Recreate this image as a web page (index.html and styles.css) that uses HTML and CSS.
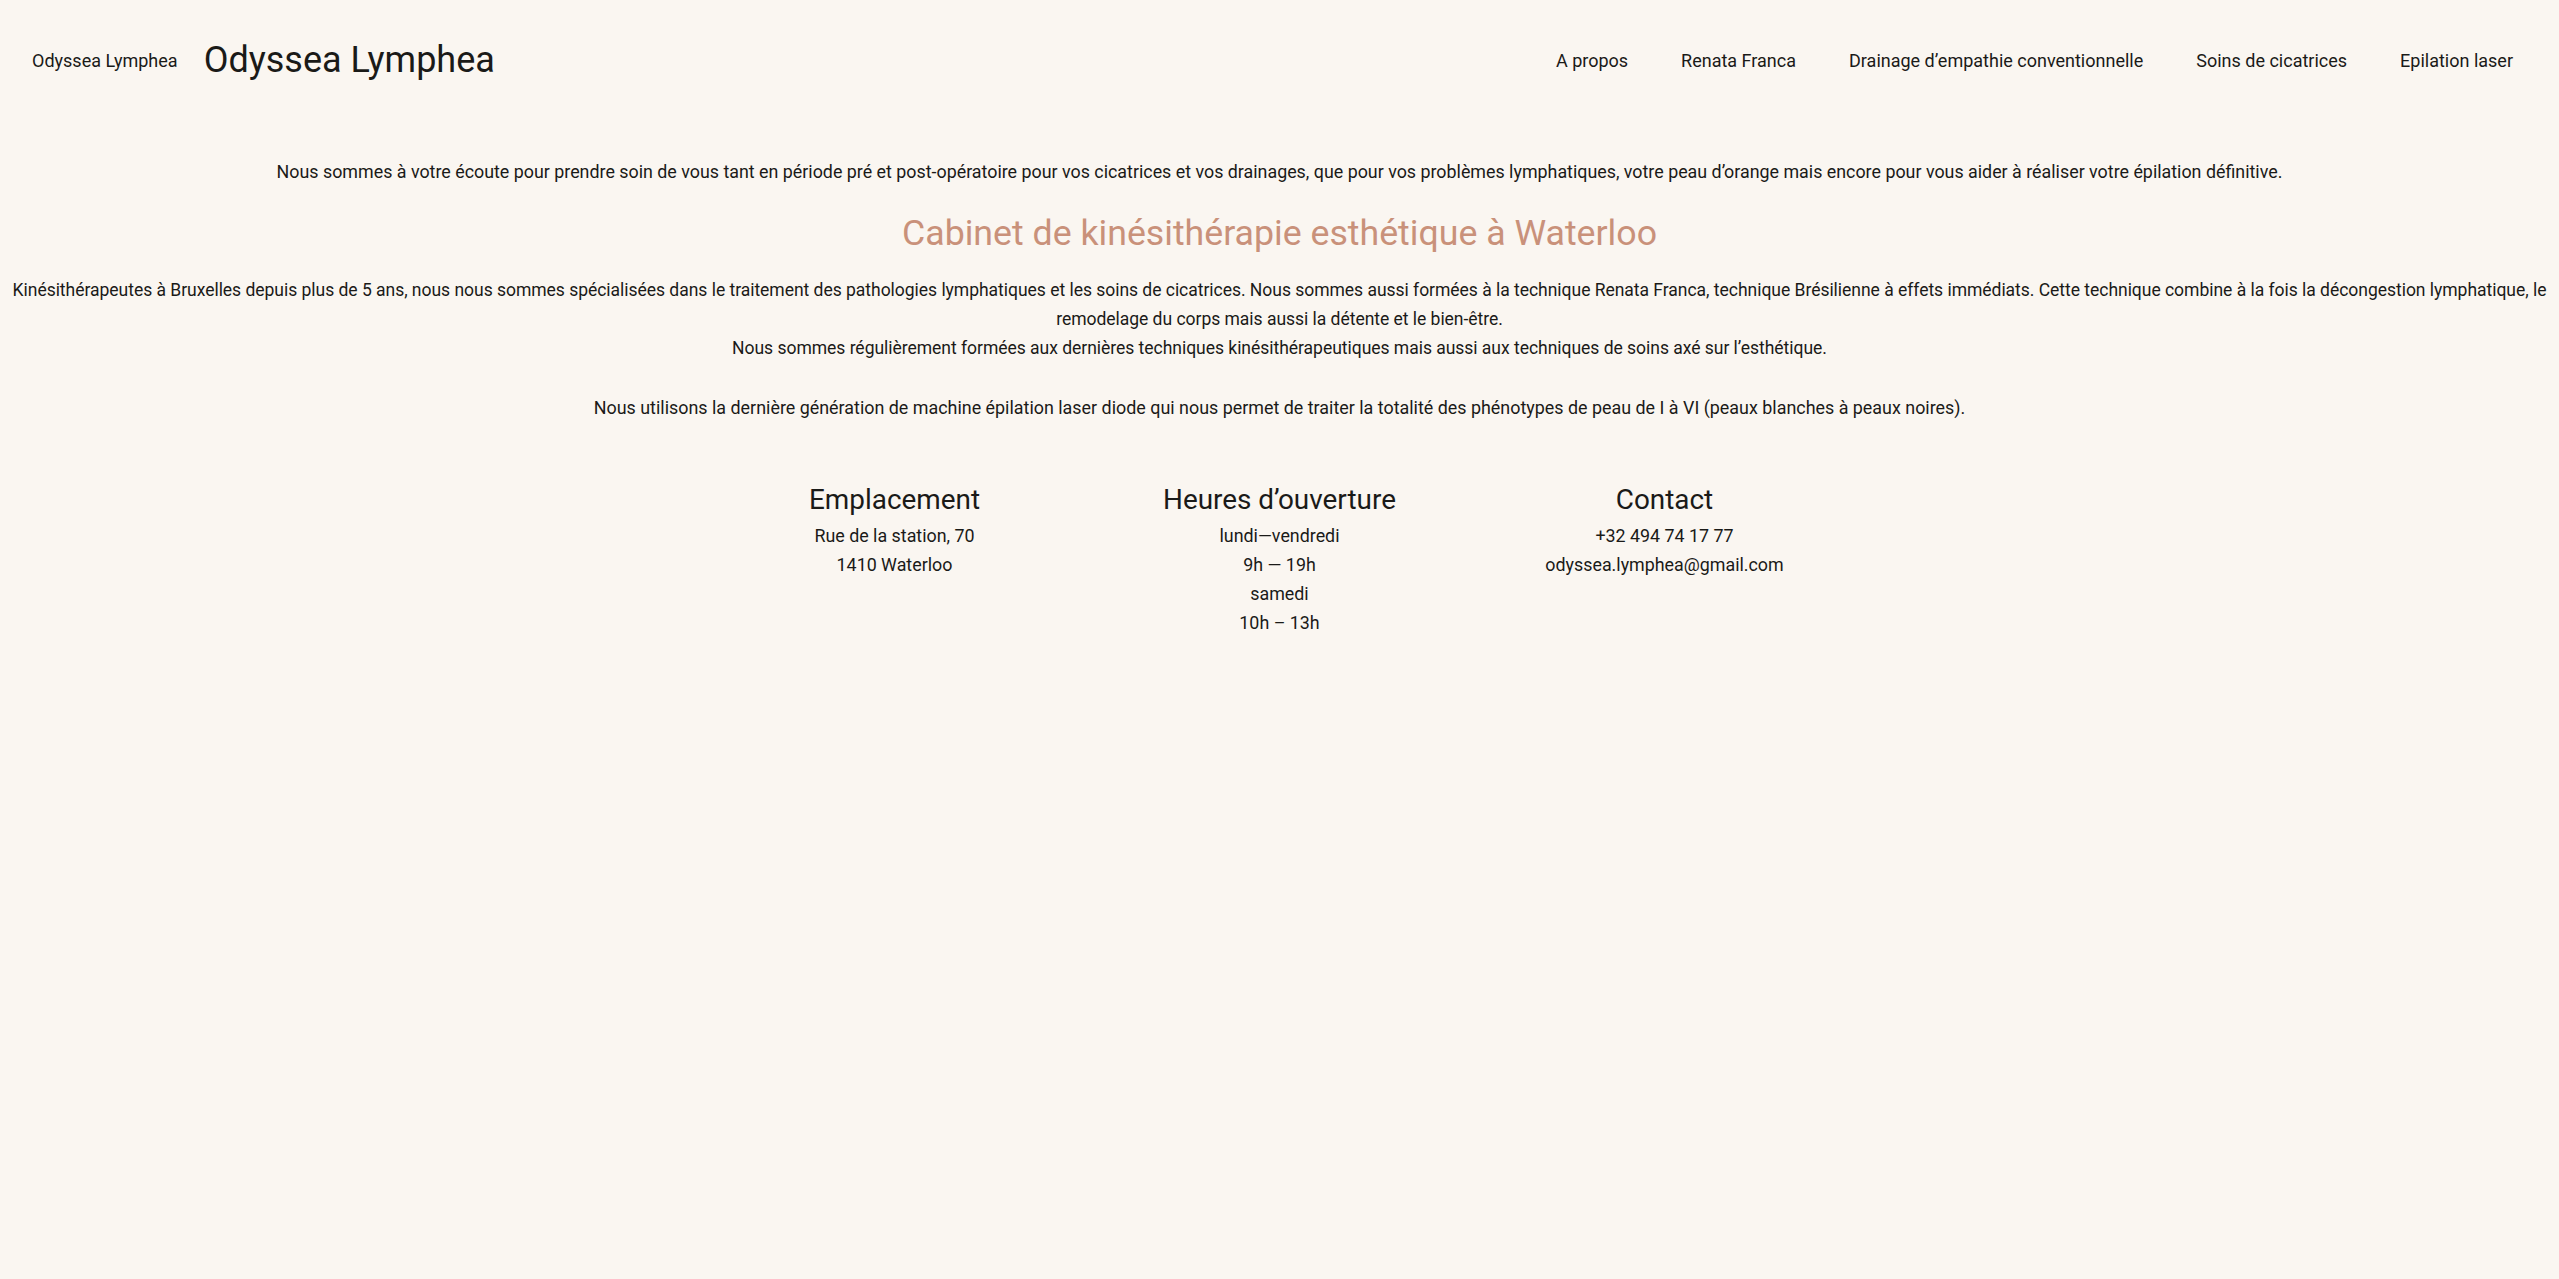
FILE: index.html
```html
<!DOCTYPE html>
<html lang="fr">
<head>
<meta charset="utf-8">
<title>Odyssea Lymphea</title>
<link rel="stylesheet" href="styles.css">
</head>
<body>
<header class="site-header">
  <div class="brand">
    <span class="brand-small">Odyssea Lymphea</span>
    <span class="brand-large">Odyssea Lymphea</span>
  </div>
  <nav class="main-nav">
    <a href="#">A propos</a>
    <a href="#">Renata Franca</a>
    <a href="#">Drainage d’empathie conventionnelle</a>
    <a href="#">Soins de cicatrices</a>
    <a href="#">Epilation laser</a>
  </nav>
</header>
<main class="content">
  <p class="intro">Nous sommes à votre écoute pour prendre soin de vous tant en période pré et post-opératoire pour vos cicatrices et vos drainages, que pour vos problèmes lymphatiques, votre peau d’orange mais encore pour vous aider à réaliser votre épilation définitive.</p>
  <h1 class="title">Cabinet de kinésithérapie esthétique à Waterloo</h1>
  <p class="about">Kinésithérapeutes à Bruxelles depuis plus de 5 ans, nous nous sommes spécialisées dans le traitement des pathologies lymphatiques et les soins de cicatrices. Nous sommes aussi formées à la technique Renata Franca, technique Brésilienne à effets immédiats. Cette technique combine à la fois la décongestion lymphatique, le remodelage du corps mais aussi la détente et le bien-être.<br>Nous sommes régulièrement formées aux dernières techniques kinésithérapeutiques mais aussi aux techniques de soins axé sur l’esthétique.<br><br><span class="about-laser">Nous utilisons la dernière génération de machine épilation laser diode qui nous permet de traiter la totalité des phénotypes de peau de I à VI (peaux blanches à peaux noires).</span></p>
  <section class="info">
    <div class="info-col">
      <h2>Emplacement</h2>
      <p>Rue de la station, 70</p>
      <p>1410 Waterloo</p>
    </div>
    <div class="info-col">
      <h2>Heures d’ouverture</h2>
      <p>lundi—vendredi</p>
      <p>9h — 19h</p>
      <p>samedi</p>
      <p>10h – 13h</p>
    </div>
    <div class="info-col">
      <h2>Contact</h2>
      <p>+32 494 74 17 77</p>
      <p>odyssea.lymphea@gmail.com</p>
    </div>
  </section>
</main>
</body>
</html>
```
FILE: styles.css
```css
html, body {
  margin: 0;
  padding: 0;
  background: #faf6f1;
}
body {
  font-family: Roboto, "Liberation Sans", sans-serif;
  color: #1a1a18;
  font-size: 17.85px;
  line-height: 29.2px;
  min-height: 1279px;
}
.site-header {
  height: 121px;
  display: flex;
  align-items: center;
  justify-content: space-between;
  padding: 0 46px 0 32px;
}
.brand {
  display: flex;
  align-items: center;
  gap: 26px;
}
.brand-small {
  font-size: 18px;
  line-height: 22px;
}
.brand-large {
  font-size: 36px;
  line-height: 43px;
}
.main-nav {
  display: flex;
  align-items: center;
  gap: 53px;
}
.main-nav a {
  color: #1a1a18;
  text-decoration: none;
  font-size: 18px;
  line-height: 22px;
}
.content {
  text-align: center;
}
.intro {
  margin: 36px 0 0;
}
.title {
  margin: 25.5px 0 0;
  font-size: 35.7px;
  line-height: 43px;
  font-weight: 400;
  color: #c9917a;
}
.about {
  margin: 21px 0 0;
  font-size: 17.55px;
  letter-spacing: -0.04px;
}
.about-laser {
  font-size: 17.9px;
  letter-spacing: 0;
  vertical-align: top;
}
.info {
  display: flex;
  justify-content: center;
  margin-top: 60px;
}
.info-col {
  width: 385px;
}
.info-col h2 {
  margin: 0 0 3px;
  font-size: 27.9px;
  line-height: 36px;
  font-weight: 400;
}
.info-col p {
  margin: 0;
}
```
